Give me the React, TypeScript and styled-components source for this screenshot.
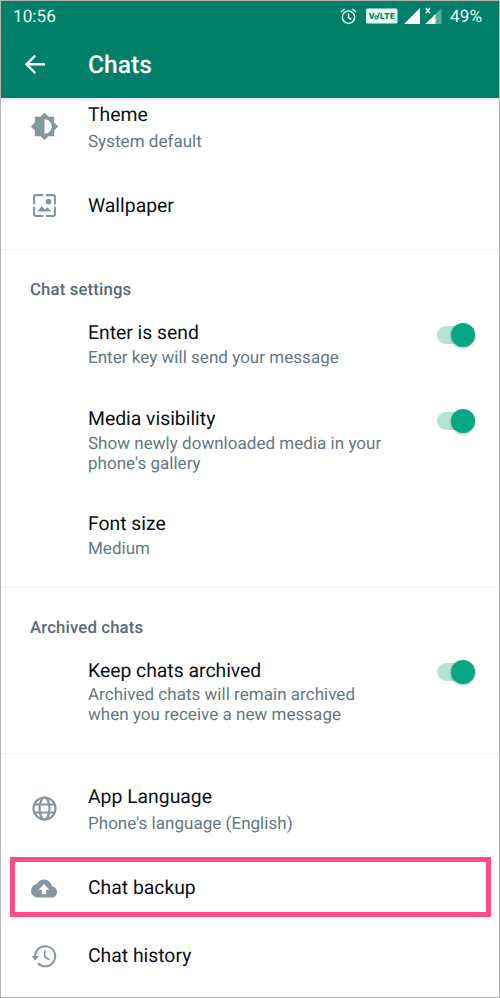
import React from 'react';
import styled, { createGlobalStyle } from 'styled-components';

const Global = createGlobalStyle`
  * { box-sizing: border-box; }
  body {
    margin: 0;
    background: #fff;
    font-family: Roboto, "Liberation Sans", sans-serif;
    text-rendering: geometricPrecision;
  }
`;

const Screen = styled.div`
  display: flex;
  flex-direction: column;
  width: 500px;
  height: 998px;
  overflow: hidden;
  border: 1px solid #b4b4b4;
  background: #fff;
`;

const Header = styled.header`
  flex: none;
  height: 97px;
  background: #008069;
  color: #fff;
  box-shadow: 0 1px 4px rgba(0, 0, 0, 0.16);
`;

const StatusBar = styled.div`
  display: flex;
  align-items: center;
  height: 30px;
  padding: 0 17px 0 12px;
  color: #e6fbf5;
`;

const StatusText = styled.span`
  padding-top: 1px;
  font-size: 17.2px;
  line-height: 30px;
`;

const StatusIcons = styled.div`
  display: flex;
  align-items: center;
  height: 30px;
  margin: 0 8px 0 auto;
`;

const IconGap = styled.span<{ $width: number }>`
  flex: none;
  width: ${(p) => p.$width}px;
`;

const Toolbar = styled.div`
  display: flex;
  align-items: center;
  height: 67px;
  padding-left: 20px;
`;

const Heading = styled.h1`
  margin: 3px 0 0 39px;
  font-size: 24.6px;
  font-weight: 500;
  line-height: 30px;
`;

const Group = styled.section<{ $height: number; $line?: boolean }>`
  display: flex;
  flex: none;
  flex-direction: column;
  height: ${(p) => p.$height}px;
  border-bottom: ${(p) => (p.$line ? '1px solid #f0f2f3' : 'none')};
`;

const GroupTitle = styled.h2`
  height: 49px;
  margin: 0;
  padding: 30px 0 0 29px;
  color: #5b6b76;
  font-size: 16.8px;
  font-weight: 500;
  line-height: 20px;
  letter-spacing: 0.13px;
`;

const Row = styled.div<{ $height: number; $top: number }>`
  display: grid;
  flex: none;
  grid-template-columns: 87px 310px 1fr;
  align-items: start;
  height: ${(p) => p.$height}px;
  padding-top: ${(p) => p.$top}px;
`;

const HighlightedRow = styled.div`
  display: grid;
  flex: none;
  grid-template-columns: 73px 1fr;
  align-items: start;
  height: 60px;
  margin: 0 8px 0 9px;
  padding-top: 13.5px;
  border: 5px solid #fd4d88;
`;

const IconCell = styled.div<{ $left?: number; $top?: number }>`
  height: 28px;
  padding-left: ${(p) => p.$left ?? 29}px;
  margin-top: ${(p) => p.$top ?? -2}px;
  svg { display: block; }
`;

const Title = styled.div`
  color: #0b1014;
  font-size: 19.35px;
  line-height: 24px;
  white-space: nowrap;
`;

const Summary = styled.div<{ $gap?: number }>`
  margin-top: ${(p) => p.$gap ?? 3}px;
  color: #667781;
  font-size: 17px;
  line-height: 20px;
  letter-spacing: 0.03px;
  white-space: pre-line;
`;

const Toggle = styled.div<{ $top?: number }>`
  display: flex;
  align-items: center;
  justify-content: flex-end;
  width: 38px;
  height: 18px;
  margin: ${(p) => p.$top ?? 5}px 0 0 39px;
  border-radius: 9px;
  background: #b2e5d8;
`;

const Knob = styled.div`
  flex: none;
  width: 24px;
  height: 24px;
  border-radius: 50%;
  background: #06a884;
  box-shadow: 0 1px 3px rgba(0, 0, 0, 0.32);
`;

const Switch = ({ top }: { top?: number }) => (
  <Toggle role="switch" aria-checked="true" $top={top}>
    <Knob />
  </Toggle>
);

const GREY = '#8496a0';

const BackIcon = () => (
  <svg width="28" height="28" viewBox="0 0 28 28" fill="none" stroke="#fff" strokeWidth="2.4">
    <path d="M24 13.3H6.5M14.3 4.5 5.5 13.3l8.8 8.8" />
  </svg>
);

const AlarmIcon = () => (
  <svg width="17" height="17" viewBox="0 0 17 17" fill="none" stroke="#e6fbf5" strokeWidth="1.5">
    <circle cx="8.5" cy="9.2" r="6.2" />
    <path d="M8.5 5.5v4l2.8 1.8M.8 4 4.6 1M16.2 4l-3.8-3" />
  </svg>
);

const VolteIcon = () => (
  <svg width="32" height="16" viewBox="0 0 32 16">
    <rect y=".5" width="31.5" height="15" rx="1.5" fill="#e6fbf5" />
    <g fill="#008069" fontFamily="Roboto, sans-serif" fontWeight="900" fontSize="8.4">
      <text x="3" y="11.2">V</text>
      <text x="14" y="11.2" textLength="14.6">LTE</text>
    </g>
    <circle cx="10.3" cy="9.4" r="1.5" fill="none" stroke="#008069" strokeWidth="1.1" />
    <path d="M11.8 9.8 13.4 4.5" stroke="#008069" strokeWidth="1.1" />
  </svg>
);

const SignalIcon = () => (
  <svg width="16" height="16" viewBox="0 0 16 16">
    <path d="M16 0v16H0z" fill="#fff" />
  </svg>
);

const NoSignalIcon = () => (
  <svg width="17" height="18" viewBox="0 0 17 18">
    <path d="M16.5 1v16H.5z" fill="#fff" opacity=".35" />
    <path d="M10.5 7v10H.5z" fill="#fff" />
    <path d="M0 0h6.5v9H0z" fill="#008069" />
    <path d="m.8 1 4.2 5.2M5 1 .8 6.2" stroke="#fff" strokeWidth="1.4" />
  </svg>
);

const ThemeIcon = () => (
  <svg width="29" height="29" viewBox="0 0 24 24" fill={GREY}>
    <path d="M20 15.31 23.31 12 20 8.69V4h-4.69L12 .69 8.69 4H4v4.69L.69 12 4 15.31V20h4.69L12 23.31 15.31 20H20zM12 18V6c3.31 0 6 2.69 6 6s-2.69 6-6 6z" />
  </svg>
);

const WallpaperIcon = () => (
  <svg width="25" height="25" viewBox="0 0 24 24" fill={GREY}>
    <path
      d="M10.7 2H3.5Q2 2 2 3.5v7.2M13.3 2h7.2Q22 2 22 3.5v7.2M2 13.3v7.2Q2 22 3.5 22h7.2M13.3 22h7.2q1.5 0 1.5-1.5v-7.2"
      fill="none"
      stroke={GREY}
      strokeWidth="2"
    />
    <circle cx="15.9" cy="8.2" r="2.8" />
    <path d="m5.2 17.8 4.2-5.4 3 3.5 2.3-2.3 4.2 4.2z" />
  </svg>
);

const GlobeIcon = () => (
  <svg width="26" height="26" viewBox="0 0 26 26" fill="none" stroke={GREY} strokeWidth="2.2">
    <circle cx="13.5" cy="13.5" r="11" />
    <ellipse cx="13.5" cy="13.5" rx="5" ry="11" />
    <path d="M3.1 9.5h20.8M3.1 17.5h20.8" />
  </svg>
);

const CloudIcon = () => (
  <svg width="26" height="27" viewBox="0 0 24 24" preserveAspectRatio="none" fill={GREY}>
    <path d="M19.35 10.04A7.49 7.49 0 0 0 12 4C9.11 4 6.6 5.64 5.35 8.04A5.994 5.994 0 0 0 0 14c0 3.31 2.69 6 6 6h13c2.76 0 5-2.24 5-5 0-2.64-2.05-4.78-4.65-4.96zM14 13v4h-4v-4H7l5-5 5 5h-3z" />
  </svg>
);

const HistoryIcon = () => (
  <svg width="26" height="26" viewBox="0 0 26 26" fill="none" stroke={GREY} strokeWidth="2">
    <path d="M4.2 14.5V13A10 10 0 1 1 7 20.2" />
    <path d="M.5 13.1h7.4L4.2 17.6z" fill={GREY} stroke="none" />
    <path d="M13.8 7.5V14l4.6 2.7" strokeWidth="1.6" />
  </svg>
);

export default function App() {
  return (
    <>
      <Global />
      <Screen>
        <Header>
          <StatusBar>
            <StatusText>10:56</StatusText>
            <StatusIcons>
              <AlarmIcon />
              <IconGap $width={9} />
              <VolteIcon />
              <IconGap $width={6} />
              <SignalIcon />
              <IconGap $width={5} />
              <NoSignalIcon />
            </StatusIcons>
            <StatusText>49%</StatusText>
          </StatusBar>
          <Toolbar>
            <BackIcon />
            <Heading>Chats</Heading>
          </Toolbar>
        </Header>

        <Group $height={152} $line>
          <Row $height={68} $top={5}>
            <IconCell $top={9}><ThemeIcon /></IconCell>
            <div>
              <Title>Theme</Title>
              <Summary $gap={5}>System default</Summary>
            </div>
          </Row>
          <Row $height={83} $top={28}>
            <IconCell $left={31} $top={-1}><WallpaperIcon /></IconCell>
            <Title>Wallpaper</Title>
          </Row>
        </Group>

        <Group $height={338} $line>
          <GroupTitle>Chat settings</GroupTitle>
          <Row $height={86} $top={22}>
            <span />
            <div>
              <Title>Enter is send</Title>
              <Summary>Enter key will send your message</Summary>
            </div>
            <Switch />
          </Row>
          <Row $height={106} $top={22}>
            <span />
            <div>
              <Title>Media visibility</Title>
              <Summary>{"Show newly downloaded media in your\nphone's gallery"}</Summary>
            </div>
            <Switch />
          </Row>
          <Row $height={90} $top={21}>
            <span />
            <div>
              <Title>Font size</Title>
              <Summary>Medium</Summary>
            </div>
          </Row>
        </Group>

        <Group $height={166} $line>
          <GroupTitle>Archived chats</GroupTitle>
          <Row $height={110} $top={21.5}>
            <span />
            <div>
              <Title>Keep chats archived</Title>
              <Summary $gap={2}>{'Archived chats will remain archived\nwhen you receive a new message'}</Summary>
            </div>
            <Switch top={4} />
          </Row>
        </Group>

        <Group $height={243}>
          <Row $height={103} $top={31}>
            <IconCell $left={30} $top={10}><GlobeIcon /></IconCell>
            <div>
              <Title>App Language</Title>
              <Summary $gap={5}>Phone's language (English)</Summary>
            </div>
          </Row>
          <HighlightedRow>
            <IconCell $left={16} $top={-1}><CloudIcon /></IconCell>
            <Title>Chat backup</Title>
          </HighlightedRow>
          <Row $height={80} $top={27}>
            <IconCell $left={29.5} $top={-1.5}><HistoryIcon /></IconCell>
            <Title>Chat history</Title>
          </Row>
        </Group>
      </Screen>
    </>
  );
}
